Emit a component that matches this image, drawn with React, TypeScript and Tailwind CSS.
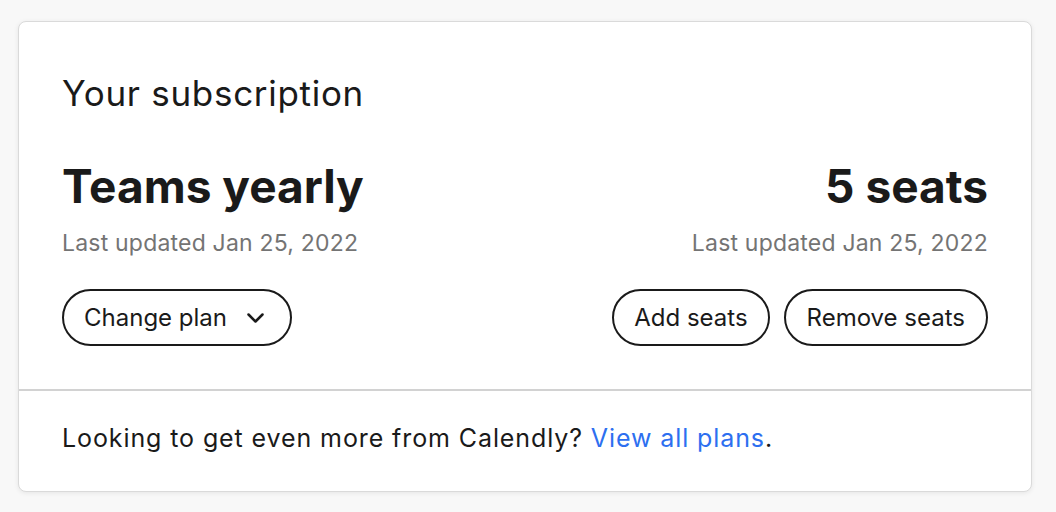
export default function App() {
  return (
    <div className="min-h-[512px] w-full bg-[#f8f8f8] pt-[21px] px-[18px] font-['Inter',sans-serif] text-[#1a1a1a]">
      <div className="w-[1014px] h-[471px] rounded-lg border border-[#dadada] bg-white shadow-[0_1px_5px_rgba(0,0,0,0.08)]">
        <div className="px-[43px] pt-[49px] pb-[43px] border-b-2 border-[#d2d2d2]">
          <h1 className="text-[35px] leading-[44px] font-normal tracking-[0.7px]">Your subscription</h1>

          <div className="mt-[43px] flex justify-between">
            {/* plan */}
            <div className="flex flex-col items-start">
              <h2 className="text-[46px] leading-[56px] font-bold">Teams yearly</h2>
              <p className="mt-[13px] text-[23px] leading-[32px] text-[#747474] tracking-[0.2px]">Last updated Jan 25, 2022</p>
              <button className="mt-[30px] h-[57px] flex items-center gap-[20px] pl-[20px] pr-[26px] rounded-full border-2 border-[#1a1a1a] text-[24px]">
                Change plan
                <svg width="17" height="10" viewBox="0 0 17 10" fill="none" stroke="currentColor" strokeWidth="2.5" strokeLinecap="round" strokeLinejoin="round">
                  <path d="M1.5 1.5 8.5 8.5 15.5 1.5" />
                </svg>
              </button>
            </div>

            {/* seats */}
            <div className="flex flex-col items-end">
              <h2 className="text-[46px] leading-[56px] font-bold">5 seats</h2>
              <p className="mt-[13px] text-[23px] leading-[32px] text-[#747474] tracking-[0.2px]">Last updated Jan 25, 2022</p>
              <div className="mt-[30px] flex gap-[14px]">
                <button className="h-[57px] px-[20px] rounded-full border-2 border-[#1a1a1a] text-[24px]">Add seats</button>
                <button className="h-[57px] px-[21px] rounded-full border-2 border-[#1a1a1a] text-[24px]">Remove seats</button>
              </div>
            </div>
          </div>
        </div>

        <div className="px-[43px] pt-[31px]">
          <p className="text-[25px] leading-[32px] tracking-[0.9px]">
            Looking to get even more from Calendly?{' '}
            <a href="#" className="text-[#2d6ff0]">View all plans</a>.
          </p>
        </div>
      </div>
    </div>
  );
}
